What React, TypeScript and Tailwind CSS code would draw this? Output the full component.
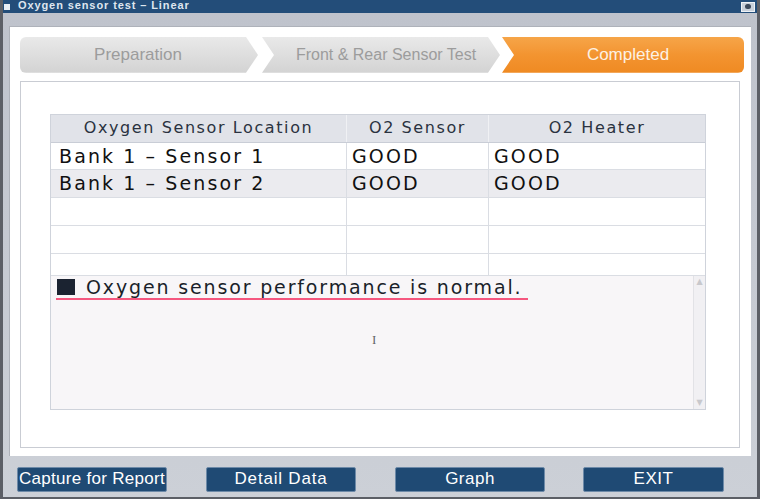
import React from "react";

const rows = [
  { loc: "Bank 1 – Sensor 1", sensor: "GOOD", heater: "GOOD" },
  { loc: "Bank 1 – Sensor 2", sensor: "GOOD", heater: "GOOD" },
  { loc: "", sensor: "", heater: "" },
  { loc: "", sensor: "", heater: "" },
  { loc: "", sensor: "", heater: "" },
];

const rowClasses = ["h-[27px] bg-white", "h-[28px] bg-[#ebebef]", "h-[28px] bg-white", "h-[28px] bg-white", "h-[22px] bg-white"];

const buttons = [
  { label: "Capture for Report", className: "ml-[17px] w-[150px] tracking-[0.3px]" },
  { label: "Detail Data", className: "ml-[39px] w-[150px] tracking-[0.8px]" },
  { label: "Graph", className: "ml-[39px] w-[150px] tracking-[0.5px]" },
  { label: "EXIT", className: "ml-[38px] w-[141px] tracking-[0.5px]" },
];

export default function App() {
  return (
    <div className="w-[760px] h-[499px] overflow-hidden bg-[#c6cad2] flex flex-col border-l-[3px] border-r-[3px] border-b-[2px] border-[#5c5f66] font-['Liberation_Sans',Arial,sans-serif]">
      {/* title bar */}
      <div className="h-[13px] shrink-0 bg-[#234d79] flex items-center text-[#dfe6ef] text-[11px] font-bold leading-none">
        <div className="ml-[1px] w-[6px] h-[6px] bg-[#e8edf3]" />
        <span className="ml-[8px] tracking-[0.9px] -mt-[2px]">Oxygen sensor test – Linear</span>
        <div className="ml-auto mr-[2px] w-[14px] h-[10px] bg-[#c9d1db] border border-[#eef2f6] flex items-center justify-center">
          <div className="w-[6px] h-[5px] rounded-full bg-[#3c4a5c]" />
        </div>
      </div>

      {/* body */}
      <div className="flex-1 flex flex-col px-[6px] pt-[13px] bg-gradient-to-b from-[#bfc3cc] to-[#ccd0d7]">
        <div className="h-[430px] bg-white flex flex-col pl-[10px] pt-[9px] pb-[8px] border-l border-t border-[#aeb2ba]">
          {/* steps */}
          <div className="h-[36px] flex text-[17px] mt-[1px]">
            <div className="w-[238px] h-full rounded-l-[6px] bg-gradient-to-b from-[#e9e9e9] to-[#d3d3d3] text-[#9c9c9c] flex items-center justify-center pr-[2px] [clip-path:polygon(0_0,226px_0,238px_50%,226px_100%,0_100%)]">
              Preparation
            </div>
            <div className="ml-[4px] w-[238px] h-full bg-gradient-to-b from-[#e9e9e9] to-[#d3d3d3] text-[#9c9c9c] text-[16px] flex items-center justify-center pl-[10px] [clip-path:polygon(0_0,226px_0,238px_50%,226px_100%,0_100%,12px_50%)]">
              Front &amp; Rear Sensor Test
            </div>
            <div className="ml-[2px] w-[242px] h-full rounded-r-[6px] bg-gradient-to-b from-[#f6a548] via-[#f39430] to-[#ef8a22] text-[#fdf1e4] flex items-center justify-center pl-[10px] [clip-path:polygon(0_0,100%_0,100%_100%,0_100%,12px_50%)]">
              Completed
            </div>
          </div>

          {/* content frame */}
          <div className="mt-[8px] w-[720px] h-[369px] border border-[#c9ccd3] bg-white pl-[29px] pt-[32px]">
            <div className="w-[656px] border border-[#cfd3db] font-['DejaVu_Sans',sans-serif]">
              <div className="h-[28px] flex bg-[#e1e3e9] text-[#2a3240] text-[16px] tracking-[1.6px] border-b border-[#c9cdd6]">
                <div className="w-[295px] flex items-center justify-center">Oxygen Sensor Location</div>
                <div className="w-[142px] flex items-center justify-center border-l border-[#f0f1f4]">O2 Sensor</div>
                <div className="flex-1 flex items-center justify-center border-l border-[#f0f1f4]">O2 Heater</div>
              </div>
              {rows.map((r, i) => (
                <div key={i} className={`flex text-[19px] text-[#111] tracking-[2.1px] border-b border-[#dadde3] ${rowClasses[i]}`}>
                  <div className="w-[295px] flex items-center pl-[8px]">{r.loc}</div>
                  <div className="w-[142px] flex items-center pl-[5px] border-l border-[#dadde3]">{r.sensor}</div>
                  <div className="flex-1 flex items-center pl-[5px] border-l border-[#dadde3]">{r.heater}</div>
                </div>
              ))}
              <div className="h-[133px] bg-[#f8f6f8] flex">
                <div className="flex-1 pl-[5px] pt-[1px] relative">
                  <div className="inline-flex items-center border-b-2 border-[#f5577f] pb-[1px] pr-[6px] text-[19px] leading-[20px] text-[#1a1f2a] tracking-[1.85px]">
                    <div className="w-[18px] h-[16px] bg-[#1b2331] ml-[1px] mr-[11px]" />
                    Oxygen sensor performance is normal.
                  </div>
                  <div className="absolute left-[321px] top-[57px] text-[#666] text-[13px] leading-none font-['Liberation_Serif',serif]">I</div>
                </div>
                <div className="w-[12px] flex flex-col justify-between border-l border-[#e2e2e6] bg-[#f1f0f3] text-[8px] text-[#c8c8cc] leading-none">
                  <div className="h-[12px] flex items-center justify-center">▲</div>
                  <div className="h-[12px] flex items-center justify-center">▼</div>
                </div>
              </div>
            </div>
          </div>
        </div>

        {/* buttons */}
        <div className="flex items-center h-[42px] pt-[4px] -mx-[6px] -ml-[9px]">
          {buttons.map((b) => (
            <div
              key={b.label}
              className={`h-[25px] bg-[#1f4a74] border border-[#6d8aa8] rounded-[2px] text-white text-[17px] flex items-center justify-center ${b.className}`}
            >
              {b.label}
            </div>
          ))}
        </div>
      </div>
    </div>
  );
}
